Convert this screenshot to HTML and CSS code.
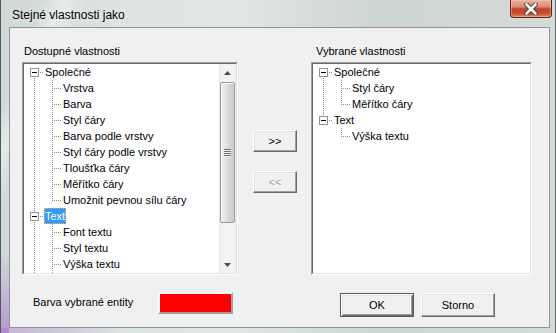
FILE: index.html
```html
<!DOCTYPE html>
<html lang="cs">
<head>
<meta charset="utf-8">
<title>Stejné vlastnosti jako</title>
<link rel="stylesheet" href="styles.css">
</head>
<body>
<div class="window">
  <div class="titlebar">
    <span class="title">Stejné vlastnosti jako</span>
    <div class="close">
      <svg width="14" height="12" viewBox="0 0 14 12" aria-hidden="true">
        <path d="M2.5 1.5 L11.5 10.5 M11.5 1.5 L2.5 10.5" stroke="#3c3c3c" stroke-width="4.6" stroke-linecap="round" fill="none"/>
        <path d="M2.5 1.5 L11.5 10.5 M11.5 1.5 L2.5 10.5" stroke="#ffffff" stroke-width="2.6" stroke-linecap="round" fill="none"/>
      </svg>
    </div>
  </div>
  <div class="client">
    <div class="panes">
      <div class="col col-left">
        <div class="label">Dostupné vlastnosti</div>
        <div class="listbox">
          <div class="listbox-inner">
            <div class="tree">
              <div class="row"><span class="c root-first"><i class="exp"></i></span><span class="item">Společné</span></div>
              <div class="row"><span class="c pass"></span><span class="c tee"></span><span class="item">Vrstva</span></div>
              <div class="row"><span class="c pass"></span><span class="c tee"></span><span class="item">Barva</span></div>
              <div class="row"><span class="c pass"></span><span class="c tee"></span><span class="item">Styl čáry</span></div>
              <div class="row"><span class="c pass"></span><span class="c tee"></span><span class="item">Barva podle vrstvy</span></div>
              <div class="row"><span class="c pass"></span><span class="c tee"></span><span class="item">Styl čáry podle vrstvy</span></div>
              <div class="row"><span class="c pass"></span><span class="c tee"></span><span class="item">Tloušťka čáry</span></div>
              <div class="row"><span class="c pass"></span><span class="c tee"></span><span class="item">Měřítko čáry</span></div>
              <div class="row"><span class="c pass"></span><span class="c ell"></span><span class="item">Umožnit pevnou sílu čáry</span></div>
              <div class="row"><span class="c root-mid"><i class="exp"></i></span><span class="item selected">Text</span></div>
              <div class="row"><span class="c pass"></span><span class="c tee"></span><span class="item">Font textu</span></div>
              <div class="row"><span class="c pass"></span><span class="c tee"></span><span class="item">Styl textu</span></div>
              <div class="row"><span class="c pass"></span><span class="c tee"></span><span class="item">Výška textu</span></div>
              <div class="row"><span class="c pass"></span><span class="c tee"></span><span class="item">Úhel natočení</span></div>
            </div>
            <div class="vscroll">
              <div class="sb-btn">
                <svg width="7" height="4" viewBox="0 0 7 4" aria-hidden="true"><polygon points="0,4 3.5,0 7,4" fill="#4a4a4a"/></svg>
              </div>
              <div class="sb-thumb"><span class="grip"></span></div>
              <div class="sb-track"></div>
              <div class="sb-btn">
                <svg width="7" height="4" viewBox="0 0 7 4" aria-hidden="true"><polygon points="0,0 7,0 3.5,4" fill="#4a4a4a"/></svg>
              </div>
            </div>
          </div>
        </div>
      </div>
      <div class="col col-mid">
        <button class="btn btn-move" type="button">&gt;&gt;</button>
        <button class="btn btn-move" type="button" disabled>&lt;&lt;</button>
      </div>
      <div class="col col-right">
        <div class="label label-right">Vybrané vlastnosti</div>
        <div class="listbox">
          <div class="listbox-inner">
            <div class="tree">
              <div class="row"><span class="c root-first"><i class="exp"></i></span><span class="item">Společné</span></div>
              <div class="row"><span class="c pass"></span><span class="c tee"></span><span class="item">Styl čáry</span></div>
              <div class="row"><span class="c pass"></span><span class="c ell"></span><span class="item">Měřítko čáry</span></div>
              <div class="row"><span class="c root-last"><i class="exp"></i></span><span class="item">Text</span></div>
              <div class="row"><span class="c"></span><span class="c ell"></span><span class="item">Výška textu</span></div>
            </div>
          </div>
        </div>
      </div>
    </div>
    <div class="footer">
      <span class="footer-label">Barva vybrané entity</span>
      <span class="swatch"></span>
      <button class="btn btn-default btn-ok" type="button">OK</button>
      <button class="btn btn-cancel" type="button">Storno</button>
    </div>
  </div>
</div>
</body>
</html>
```
FILE: styles.css
```css
* { box-sizing: border-box; }

html, body { margin: 0; padding: 0; }

body {
  width: 556px;
  height: 333px;
  overflow: hidden;
  font-family: "Liberation Sans", Arial, sans-serif;
  font-size: 11px;
  color: #000;
  background: #d0d8d7;
  --dot: #8c8c8c;
}

.window {
  width: 556px;
  height: 333px;
  display: flex;
  flex-direction: column;
  border-left: 1px solid #4f5a60;
  border-right: 1px solid #5c676c;
  background:
    linear-gradient(to top, rgba(170, 110, 205, 0.6), rgba(170, 110, 205, 0) 80px) left bottom / 8px 100% no-repeat,
    linear-gradient(to right, rgba(170, 110, 205, 0.35), rgba(170, 110, 205, 0) 120px) left bottom / 100% 5px no-repeat,
    linear-gradient(112deg, rgba(255, 255, 255, 0) 0 40px, rgba(255, 255, 255, 0.45) 58px, rgba(255, 255, 255, 0) 80px, rgba(255, 255, 255, 0) 100%),
    linear-gradient(to right, #cfd8d7 0%, #dde3e1 22%, #e2e6e4 42%, #cdd5d3 68%, #d4dbd9 100%);
}

/* ---------- title bar ---------- */
.titlebar {
  height: 27px;
  flex: none;
  display: flex;
  align-items: flex-start;
  padding-left: 11px;
}

.title {
  margin-top: 7px;
  font-size: 12px;
  line-height: 16px;
  color: #000;
  text-shadow: 0 0 6px rgba(255, 255, 255, 0.9);
}

.close {
  margin-left: auto;
  margin-right: 3px;
  width: 42px;
  height: 18px;
  display: flex;
  align-items: center;
  justify-content: center;
  border: 1px solid #5a251b;
  border-top: none;
  border-radius: 0 0 4px 4px;
  background: linear-gradient(to bottom, #eab0a0 0%, #dc8c77 40%, #c4432b 52%, #c94b31 78%, #e38a64 100%);
  box-shadow: inset 0 0 0 1px rgba(255, 200, 180, 0.45);
}

/* ---------- client area ---------- */
.client {
  flex: 1;
  margin: 0 5px 5px 8px;
  border: 1px solid #8b979d;
  background: #f0f0f0;
  display: flex;
  flex-direction: column;
}

.panes {
  display: flex;
  padding: 16px 0 0 12px;
}

.label {
  height: 14px;
  line-height: 14px;
  padding-left: 2px;
  margin-bottom: 4px;
  white-space: nowrap;
}

.label-right { padding-left: 5px; }

.col-left { width: 216px; flex: none; }

.col-mid {
  width: 44px;
  flex: none;
  margin-left: 15px;
  padding-top: 86px;
  display: flex;
  flex-direction: column;
  gap: 19px;
}

.col-right {
  width: 221px;
  flex: none;
  margin-left: 14px;
}

/* ---------- list boxes ---------- */
.listbox {
  height: 213px;
  border: 1px solid;
  border-color: #a0a0a0 #ffffff #ffffff #a0a0a0;
  background: #fff;
}

.listbox-inner {
  height: 100%;
  border: 1px solid;
  border-color: #696969 #e3e3e3 #e3e3e3 #696969;
  display: flex;
  background: #fff;
}

.tree {
  flex: 1;
  min-width: 0;
  overflow: hidden;
  padding-left: 1px;
}

.row {
  display: flex;
  height: 16px;
}

.c {
  width: 18px;
  height: 16px;
  flex: none;
  display: flex;
}

.pass {
  background: repeating-linear-gradient(to bottom, var(--dot) 0 1px, transparent 1px 2px) 9px 0 / 1px 16px no-repeat;
}

.tee {
  background:
    repeating-linear-gradient(to bottom, var(--dot) 0 1px, transparent 1px 2px) 9px 0 / 1px 16px no-repeat,
    repeating-linear-gradient(to right, var(--dot) 0 1px, transparent 1px 2px) 11px 8px / 7px 1px no-repeat;
}

.ell {
  background:
    repeating-linear-gradient(to bottom, var(--dot) 0 1px, transparent 1px 2px) 9px 0 / 1px 9px no-repeat,
    repeating-linear-gradient(to right, var(--dot) 0 1px, transparent 1px 2px) 11px 8px / 7px 1px no-repeat;
}

.root-first {
  background:
    repeating-linear-gradient(to bottom, var(--dot) 0 1px, transparent 1px 2px) 9px 14px / 1px 2px no-repeat,
    repeating-linear-gradient(to right, var(--dot) 0 1px, transparent 1px 2px) 15px 8px / 3px 1px no-repeat;
}

.root-mid {
  background:
    repeating-linear-gradient(to bottom, var(--dot) 0 1px, transparent 1px 2px) 9px 0 / 1px 4px no-repeat,
    repeating-linear-gradient(to bottom, var(--dot) 0 1px, transparent 1px 2px) 9px 14px / 1px 2px no-repeat,
    repeating-linear-gradient(to right, var(--dot) 0 1px, transparent 1px 2px) 15px 8px / 3px 1px no-repeat;
}

.root-last {
  background:
    repeating-linear-gradient(to bottom, var(--dot) 0 1px, transparent 1px 2px) 9px 0 / 1px 4px no-repeat,
    repeating-linear-gradient(to right, var(--dot) 0 1px, transparent 1px 2px) 15px 8px / 3px 1px no-repeat;
}

.exp {
  width: 9px;
  height: 9px;
  margin: 4px 0 0 5px;
  border: 1px solid #929292;
  background: linear-gradient(#000, #000) center / 5px 1px no-repeat, #fff;
}

.item {
  margin-left: 1px;
  padding: 0 1px;
  line-height: 16px;
  height: 16px;
  white-space: nowrap;
}

.item.selected {
  background: #3399ff;
  color: #fff;
  outline: 1px dotted #f0b048;
  outline-offset: -1px;
}

/* ---------- scrollbar ---------- */
.vscroll {
  width: 17px;
  flex: none;
  display: flex;
  flex-direction: column;
  background: linear-gradient(to right, #e6e6e6 0, #f3f3f3 2px, #f3f3f3 14px, #ebebeb 17px);
}

.sb-btn {
  height: 17px;
  flex: none;
  display: flex;
  align-items: center;
  justify-content: center;
}

.sb-thumb {
  height: 141px;
  flex: none;
  margin: 1px 1px 0 1px;
  border: 1px solid #999;
  border-radius: 2px;
  background: linear-gradient(to right, #f2f2f2 0%, #e4e4e4 35%, #d6d6d6 60%, #cdcdcd 100%);
  box-shadow: inset 1px 1px 0 #fbfbfb;
  display: flex;
  align-items: center;
  justify-content: center;
}

.grip {
  width: 7px;
  height: 8px;
  background: repeating-linear-gradient(to bottom, #6e6e6e 0 1px, #f2f2f2 1px 2px);
}

.sb-track { flex: 1; }

/* ---------- buttons ---------- */
.btn {
  font-family: "Liberation Sans", Arial, sans-serif;
  font-size: 11px;
  color: #000;
  background: #f0f0f0;
  border: 1px solid;
  border-color: #fff #696969 #696969 #fff;
  box-shadow: inset -1px -1px 0 #a0a0a0, inset 1px 1px 0 #e3e3e3;
  padding: 0;
  margin: 0;
  border-radius: 0;
  line-height: 14px;
}

.btn-move {
  width: 44px;
  height: 22px;
  flex: none;
}

.btn:disabled {
  color: #a0a0a0;
  text-shadow: 1px 1px 0 #fff;
}

/* ---------- footer ---------- */
.footer {
  display: flex;
  align-items: flex-start;
  margin-top: 17px;
  padding-left: 23px;
}

.footer-label {
  width: 125px;
  flex: none;
  margin-top: 3px;
  line-height: 14px;
  white-space: nowrap;
}

.swatch {
  width: 75px;
  height: 22px;
  flex: none;
  background: #ff0000;
  border: 2px solid;
  border-color: #fcfcfc #a0a0a0 #a0a0a0 #fcfcfc;
}

.btn-ok, .btn-cancel {
  width: 74px;
  height: 24px;
  flex: none;
  margin-top: 1px;
}

.btn-ok { margin-left: 107px; }

.btn-cancel { margin-left: 7px; }

.btn-default {
  border: 1px solid #5a5a5a;
  box-shadow: inset 1px 1px 0 #fff, inset -1px -1px 0 #696969, inset 2px 2px 0 #e3e3e3, inset -2px -2px 0 #a0a0a0;
}
```
